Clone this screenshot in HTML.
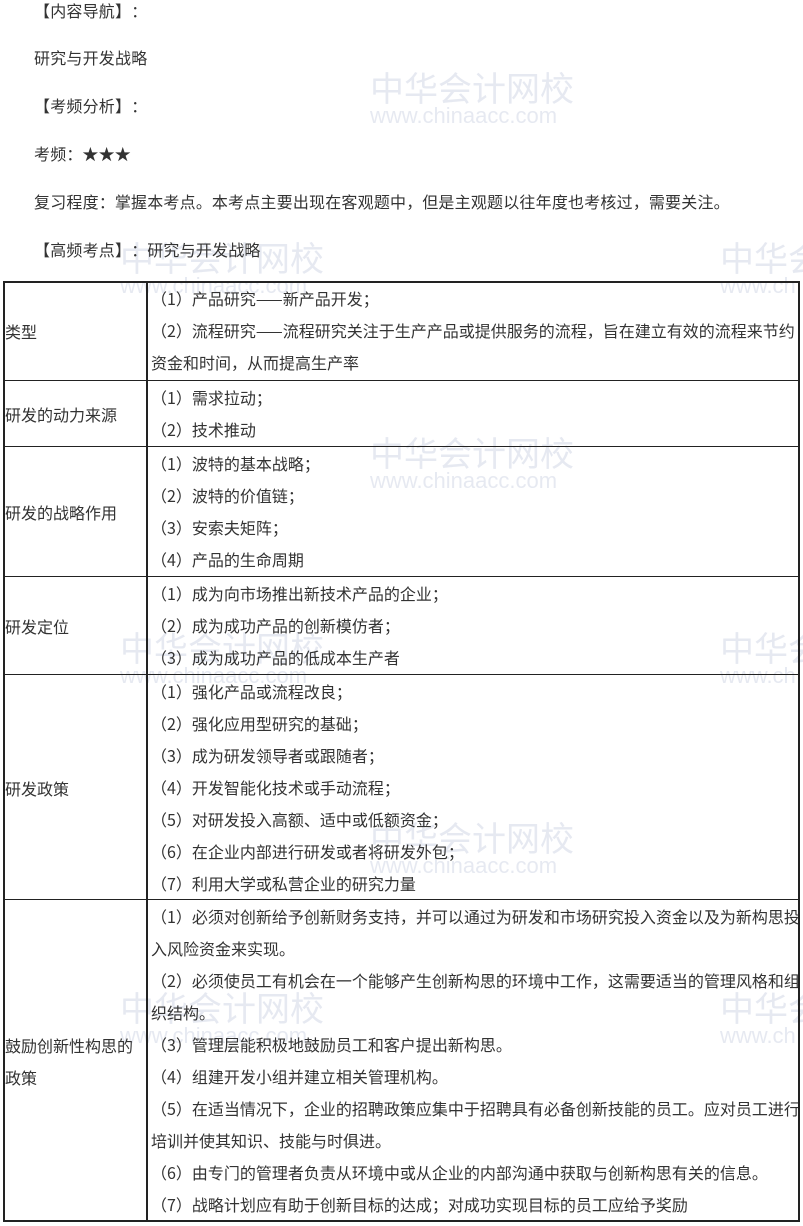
<!DOCTYPE html>
<html><head><meta charset="utf-8"><style>
body{margin:0;width:803px;height:1226px;background:#fff;position:relative;overflow:hidden;font-family:"Noto Sans CJK SC","WenQuanYi Zen Hei","Liberation Sans",sans-serif;font-size:16px;color:#333}
i{font-style:normal;display:inline-block;width:1em;text-align:left}
.t{position:absolute;left:34px;line-height:20px;white-space:nowrap;letter-spacing:.2px}
.tb{position:absolute;left:3px;width:797px;border:2px solid #222;box-sizing:border-box}
.row{position:absolute;left:0;right:0;border-top:1px solid #222}
.lc{position:absolute;left:0;width:142px;display:flex;align-items:center;height:100%;line-height:32px;padding-left:0;letter-spacing:0}
.rc{position:absolute;left:145px;right:0;top:0;line-height:32px;padding-left:1px;white-space:nowrap;overflow:hidden;letter-spacing:0}
.div{position:absolute;left:141px;top:0;bottom:0;border-left:2px solid #222}
.wm{position:absolute;color:#d3d8e6;font-size:34px;opacity:.55;white-space:nowrap;line-height:34px;letter-spacing:0}
.wm small{display:block;font-size:22px;line-height:24px;font-family:"Liberation Sans",sans-serif}
</style></head><body>
<div class="wm" style="left:370px;top:70px">中华会计网校<small>www.chinaacc.com</small></div>
<div class="wm" style="left:120px;top:240px">中华会计网校<small>www.chinaacc.com</small></div>
<div class="wm" style="left:720px;top:240px">中华会<small>www.ch</small></div>
<div class="wm" style="left:370px;top:435px">中华会计网校<small>www.chinaacc.com</small></div>
<div class="wm" style="left:120px;top:630px">中华会计网校<small>www.chinaacc.com</small></div>
<div class="wm" style="left:720px;top:630px">中华会<small>www.ch</small></div>
<div class="wm" style="left:370px;top:820px">中华会计网校<small>www.chinaacc.com</small></div>
<div class="wm" style="left:120px;top:990px">中华会计网校<small>www.chinaacc.com</small></div>
<div class="wm" style="left:720px;top:990px">中华会<small>www.ch</small></div>

<div class="t" style="top:0px">【内容导航】<i>：</i></div>
<div class="t" style="top:47px">研究与开发战略</div>
<div class="t" style="top:95px">【考频分析】<i>：</i></div>
<div class="t" style="top:143px">考频<i>：</i>★★★</div>
<div class="t" style="top:191px">复习程度<i>：</i>掌握本考点<i>。</i>本考点主要出现在客观题中<i>，</i>但是主观题以往年度也考核过<i>，</i>需要关注<i>。</i></div>
<div class="t" style="top:239px">【高频考点】<i>：</i>研究与开发战略</div>

<div class="tb" style="top:281px;height:941px">
<div class="div"></div>
<div class="row" style="top:-1px;height:98px;border-top:none">
<div class="lc">类型</div>
<div class="rc">（1）产品研究——新产品开发<i>；</i><br>（2）流程研究——流程研究关注于生产产品或提供服务的流程<i>，</i>旨在建立有效的流程来节约<br>资金和时间<i>，</i>从而提高生产率</div></div>
<div class="row" style="top:97px;height:66px">
<div class="lc">研发的动力来源</div>
<div class="rc">（1）需求拉动<i>；</i><br>（2）技术推动</div></div>
<div class="row" style="top:163px;height:130px">
<div class="lc">研发的战略作用</div>
<div class="rc">（1）波特的基本战略<i>；</i><br>（2）波特的价值链<i>；</i><br>（3）安索夫矩阵<i>；</i><br>（4）产品的生命周期</div></div>
<div class="row" style="top:293px;height:98px">
<div class="lc">研发定位</div>
<div class="rc">（1）成为向市场推出新技术产品的企业<i>；</i><br>（2）成为成功产品的创新模仿者<i>；</i><br>（3）成为成功产品的低成本生产者</div></div>
<div class="row" style="top:391px;height:225px">
<div class="lc">研发政策</div>
<div class="rc">（1）强化产品或流程改良<i>；</i><br>（2）强化应用型研究的基础<i>；</i><br>（3）成为研发领导者或跟随者<i>；</i><br>（4）开发智能化技术或手动流程<i>；</i><br>（5）对研发投入高额<i>、</i>适中或低额资金<i>；</i><br>（6）在企业内部进行研发或者将研发外包<i>；</i><br>（7）利用大学或私营企业的研究力量</div></div>
<div class="row" style="top:616px;height:321px">
<div class="lc">鼓励创新性构思的<br>政策</div>
<div class="rc">（1）必须对创新给予创新财务支持<i>，</i>并可以通过为研发和市场研究投入资金以及为新构思投<br>入风险资金来实现<i>。</i><br>（2）必须使员工有机会在一个能够产生创新构思的环境中工作<i>，</i>这需要适当的管理风格和组<br>织结构<i>。</i><br>（3）管理层能积极地鼓励员工和客户提出新构思<i>。</i><br>（4）组建开发小组并建立相关管理机构<i>。</i><br>（5）在适当情况下<i>，</i>企业的招聘政策应集中于招聘具有必备创新技能的员工<i>。</i>应对员工进行<br>培训并使其知识<i>、</i>技能与时俱进<i>。</i><br>（6）由专门的管理者负责从环境中或从企业的内部沟通中获取与创新构思有关的信息<i>。</i><br>（7）战略计划应有助于创新目标的达成<i>；</i>对成功实现目标的员工应给予奖励</div></div>
</div>
</body></html>
